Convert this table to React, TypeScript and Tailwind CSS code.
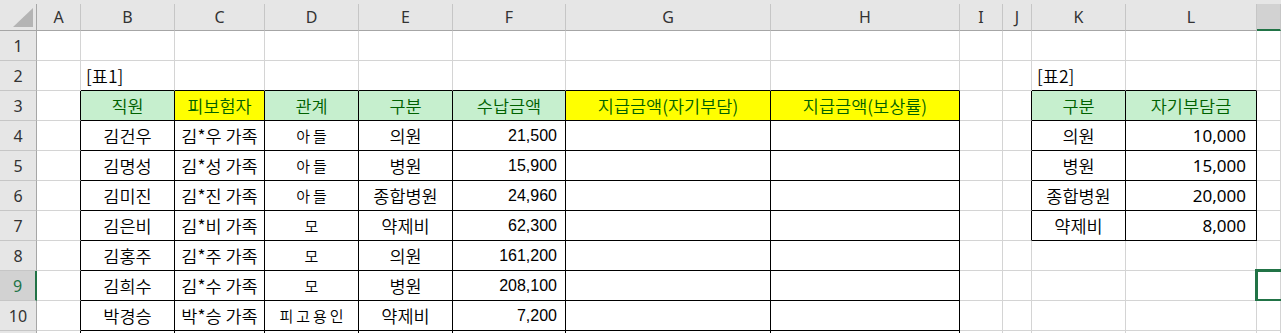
import React from "react";

type Cell = {
  t: string;
  a?: "l" | "c" | "r";
  k?: "g" | "y";
  f?: "num" | "num2" | "thin";
};

const COLS = ["A", "B", "C", "D", "E", "F", "G", "H", "I", "J", "K", "L", "M"];

const people = [
  ["김건우", "김*우 가족", "아들", "의원", "21,500"],
  ["김명성", "김*성 가족", "아들", "병원", "15,900"],
  ["김미진", "김*진 가족", "아들", "종합병원", "24,960"],
  ["김은비", "김*비 가족", "모", "약제비", "62,300"],
  ["김홍주", "김*주 가족", "모", "의원", "161,200"],
  ["김희수", "김*수 가족", "모", "병원", "208,100"],
  ["박경승", "박*승 가족", "피고용인", "약제비", "7,200"],
];

const rates = [
  ["의원", "10,000"],
  ["병원", "15,000"],
  ["종합병원", "20,000"],
  ["약제비", "8,000"],
];

// sheet contents, key = "row-colIndex" (A = 0)
const cells: Record<string, Cell> = {
  "2-1": { t: "[표1]", a: "l" },
  "2-10": { t: "[표2]", a: "l" },
  "3-1": { t: "직원", k: "g" },
  "3-2": { t: "피보험자", k: "y" },
  "3-3": { t: "관계", k: "g" },
  "3-4": { t: "구분", k: "g" },
  "3-5": { t: "수납금액", k: "g" },
  "3-6": { t: "지급금액(자기부담)", k: "y" },
  "3-7": { t: "지급금액(보상률)", k: "y" },
  "3-10": { t: "구분", k: "g" },
  "3-11": { t: "자기부담금", k: "g" },
};

people.forEach((p, i) => {
  const r = i + 4;
  cells[`${r}-1`] = { t: p[0] };
  cells[`${r}-2`] = { t: p[1] };
  cells[`${r}-3`] = { t: p[2], f: "thin" };
  cells[`${r}-4`] = { t: p[3] };
  cells[`${r}-5`] = { t: p[4], a: "r", f: "num" };
});

rates.forEach((p, i) => {
  const r = i + 4;
  cells[`${r}-10`] = { t: p[0] };
  cells[`${r}-11`] = { t: p[1], a: "r", f: "num2" };
});

const inTable = (r: number, c: number) =>
  (r >= 3 && r <= 11 && c >= 1 && c <= 7) ||
  (r >= 3 && r <= 7 && c >= 10 && c <= 11);

const SEL_ROW = 9;
const SEL_COL = 12;

const SheetCell: React.FC<{ r: number; c: number }> = ({ r, c }) => {
  const cell = cells[`${r}-${c}`];
  const rightBlack = inTable(r, c) || inTable(r, c + 1);
  const bottomBlack = inTable(r, c) || inTable(r + 1, c);

  let bg = "bg-white";
  let color = "text-black";
  if (cell?.k === "g") {
    bg = "bg-[#c6efce]";
    color = "text-[#006100]";
  } else if (cell?.k === "y") {
    bg = "bg-[#ffff00]";
    color = "text-[#006100]";
  }

  let align = "justify-center";
  if (cell?.a === "l") align = "justify-start pl-[5px]";
  if (cell?.a === "r") align = "justify-end pr-[8px]";

  let font = "font-['Noto_Sans_CJK_KR',sans-serif] text-[17.5px] font-[350]";
  if (cell?.f === "num") font = "font-['Liberation_Sans',Arial,sans-serif] text-[16px]";
  if (cell?.f === "num2") font = "font-['Noto_Sans','Noto_Sans_CJK_KR',sans-serif] text-[17px] pr-[10px]";
  if (cell?.f === "thin") font = "font-['Noto_Sans_CJK_KR',sans-serif] text-[15px] font-[350] tracking-[3px] pl-[3px]";

  return (
    <div
      className={`relative flex items-center whitespace-nowrap leading-none border-r border-b ${
        rightBlack ? "border-r-black" : "border-r-[#d4d4d4]"
      } ${bottomBlack ? "border-b-black" : "border-b-[#d4d4d4]"} ${bg} ${color} ${align} ${font}`}
    >
      {cell?.t}
      {r === SEL_ROW && c === SEL_COL && (
        <div className="absolute -left-[2px] -top-[2px] -bottom-[2px] -right-[4px] border-[3px] border-[#217346]" />
      )}
    </div>
  );
};

const App: React.FC = () => {
  const rows = Array.from({ length: 11 }, (_, i) => i + 1);

  return (
    <div className="h-[333px] w-[1281px] overflow-hidden bg-white">
      <div className="grid grid-cols-[37px_44px_94px_90px_94px_94px_113px_205px_189px_43px_29px_94px_131px_1fr] grid-rows-[4px_27px_repeat(11,30px)]">
        {/* thin strip above the column letters */}
        <div className="col-span-14 bg-[#e6e6e6]" />

        {/* corner */}
        <div className="flex items-end justify-end border-r border-b border-[#a6a6a6] bg-[#e6e6e6] pb-[3px] pr-[3px]">
          <svg width="20" height="19" viewBox="0 0 20 19">
            <polygon points="20,0 20,19 0,19" fill="#b4b4b4" />
          </svg>
        </div>

        {COLS.map((col, i) => (
          <div
            key={col}
            className={`flex items-center justify-center border-r border-r-[#c6c6c6] font-['Noto_Sans',sans-serif] text-[16px] text-[#333] ${
              i === SEL_COL
                ? "border-b-2 border-b-[#217346] bg-[#d2d2d2]"
                : "border-b border-b-[#a6a6a6] bg-[#e6e6e6]"
            }`}
          >
            {i === SEL_COL ? "" : col}
          </div>
        ))}

        {rows.map((r) => (
          <React.Fragment key={r}>
            <div
              className={`flex items-center justify-center border-b border-b-[#c6c6c6] font-['Noto_Sans',sans-serif] text-[16px] ${
                r === SEL_ROW
                  ? "border-r-2 border-r-[#217346] bg-[#d2d2d2] text-[#217346]"
                  : "border-r border-r-[#a6a6a6] bg-[#e6e6e6] text-[#333]"
              }`}
            >
              {r <= 10 ? r : ""}
            </div>
            {COLS.map((_, c) => (
              <SheetCell key={c} r={r} c={c} />
            ))}
          </React.Fragment>
        ))}
      </div>
    </div>
  );
};

export default App;
